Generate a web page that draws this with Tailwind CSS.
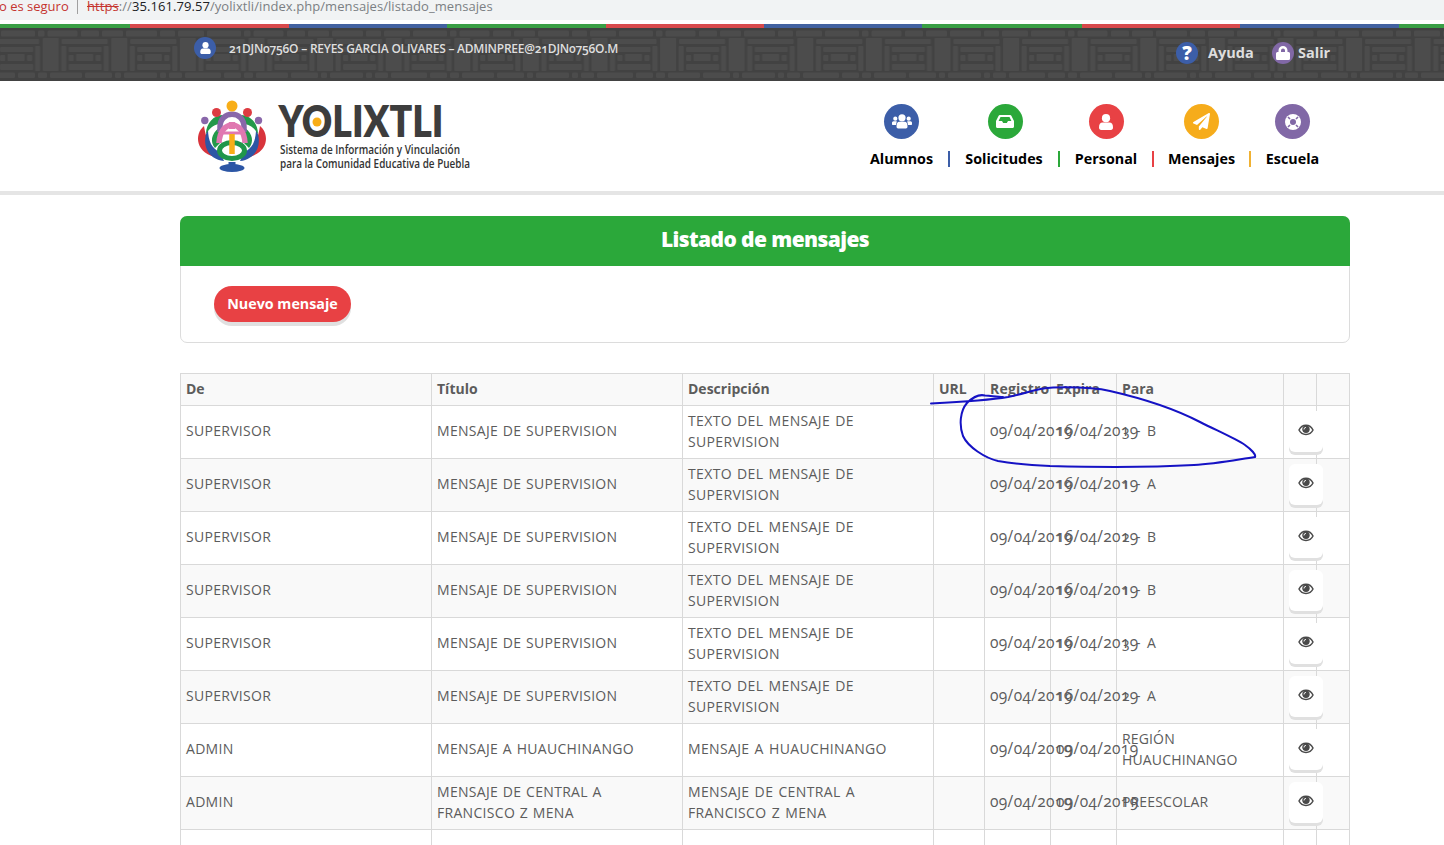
<!DOCTYPE html>
<html lang="es">
<head>
<meta charset="utf-8">
<title>Yolixtli - Listado de mensajes</title>
<script src="https://cdn.jsdelivr.net/npm/@tailwindcss/browser@4"></script>
</head>
<body class="relative h-[845px] overflow-hidden bg-white font-['Open_Sans','Noto_Sans',sans-serif] text-[#5c5c5c]">

<svg class="hidden">
  <symbol id="user" viewBox="0 0 14 16"><circle cx="7" cy="4.2" r="4.1"/><path d="M0 13.600c0-3.400 1.200-5 3.600-5h6.800c2.400 0 3.600 1.600 3.600 5 0 1.500-.8 2.400-2.200 2.400H2.200C.8 16 0 15.100 0 13.600z"/></symbol>
  <symbol id="eye" viewBox="0 0 16 12"><path d="M1 6C4-.3 12-.3 15 6 12 12 4 12 1 6z" fill="#fff" stroke="#4a4a4a" stroke-width="1.500"/><circle cx="8" cy="5.300" r="3.700" fill="#4a4a4a"/><path d="M6 5.500A2 2 0 0 1 8 3.400" stroke="#fff" fill="none" stroke-width=".9"/></symbol>
</svg>

<div class="flex h-5 items-start overflow-hidden bg-[#f1f3f4] text-[13px] leading-[13px] whitespace-nowrap">
  <span class="-ml-[1px] w-[70px] text-[#c5352f]">o es seguro</span>
  <span class="ml-2 h-[14px] w-px bg-[#a0a0a0]"></span>
  <span class="ml-[9px] tracking-[0.07px] text-[#7b7f83]"><span class="text-[#c5352f] line-through">https</span>://<span class="text-[#202124]">35.161.79.57</span>/yolixtli/index.php/mensajes/listado_mensajes</span>
</div>

<header>
  <div class="mt-1 flex h-1 overflow-hidden">
    <i class="h-full w-[130px] shrink-0 bg-[#3a9f45]"></i><i class="h-full w-[159px] shrink-0 bg-[#d8494b]"></i><i class="h-full w-[158px] shrink-0 bg-[#4261a0]"></i><i class="h-full w-[159px] shrink-0 bg-[#3a9f45]"></i><i class="h-full w-[158px] shrink-0 bg-[#d8494b]"></i><i class="h-full w-[158px] shrink-0 bg-[#4261a0]"></i><i class="h-full w-[160px] shrink-0 bg-[#3a9f45]"></i><i class="h-full w-[158px] shrink-0 bg-[#d8494b]"></i><i class="h-full w-[159px] shrink-0 bg-[#4261a0]"></i><i class="h-full w-[45px] shrink-0 bg-[#3a9f45]"></i>
  </div>
  <div class="relative h-[53px] bg-[#424242]">
    <svg class="absolute inset-0 h-full w-full" fill="#4c4c4c">
      <defs>
        <pattern id="weave" x="42.700" y="0" width="68.600" height="53" patternUnits="userSpaceOnUse">
          <rect x="0" y="10" width="16" height="33" rx="1"/>
          <rect x="19" y="11" width="46" height="5" rx="1"/>
          <rect x="18.500" y="18" width="5" height="25" rx="1"/><rect x="61" y="18" width="5" height="25" rx="1"/>
          <rect x="26" y="19" width="33" height="5" rx="1"/>
          <rect x="26" y="27" width="5" height="6" rx="1"/><rect x="33.500" y="26" width="17" height="7" rx="1"/><rect x="53" y="27" width="5" height="6" rx="1"/>
          <rect x="26" y="36" width="33" height="6" rx="1"/>
        </pattern>
        <pattern id="rows" x="38" y="0" width="206" height="53" patternUnits="userSpaceOnUse">
          <g transform="translate(-16 0)">
          <rect x="16" y="2.500" width="6.500" height="6" rx="1.500"/><rect x="25.500" y="2.500" width="30" height="6" rx="1.500"/><rect x="59" y="2.500" width="18" height="6" rx="1.500"/><rect x="80" y="2.500" width="21" height="6" rx="1.500"/><rect x="104" y="2.500" width="31" height="6" rx="1.500"/><rect x="138" y="2.500" width="15" height="6" rx="1.500"/><rect x="156" y="2.500" width="26" height="6" rx="1.500"/><rect x="185" y="2.500" width="34" height="6" rx="1.500"/>
          <rect x="16" y="44.500" width="9" height="5.500" rx="1.500"/><rect x="28" y="44.500" width="32" height="5.500" rx="1.500"/><rect x="63" y="44.500" width="27" height="5.500" rx="1.500"/><rect x="93" y="44.500" width="6" height="5.500" rx="1.500"/><rect x="102" y="44.500" width="33" height="5.500" rx="1.500"/><rect x="138" y="44.500" width="6" height="5.500" rx="1.500"/><rect x="147" y="44.500" width="13" height="5.500" rx="1.500"/><rect x="163" y="44.500" width="36" height="5.500" rx="1.500"/><rect x="202" y="44.500" width="17" height="5.500" rx="1.500"/>
          </g>
        </pattern>
      </defs>
      <rect width="100%" height="100%" fill="url(#weave)"/><rect width="100%" height="100%" fill="url(#rows)"/>
    </svg>
    <div class="relative flex h-full items-start pl-[194px] whitespace-nowrap text-[#dedede]">
      <span class="mt-[9px] flex size-[22px] items-center justify-center rounded-full bg-[#3c5ea8]"><svg class="h-3 w-[11px] fill-white"><use href="#user"/></svg></span>
      <span class="mt-[13px] ml-[13px] w-[390px] text-[12px] leading-4 font-semibold tracking-[-0.23px] oldstyle-nums">21DJN0756O – REYES GARCIA OLIVARES – ADMINPREE@21DJN0756O.M</span>
      <span class="mt-[14px] ml-[557px] flex size-[22px] items-center justify-center rounded-full bg-[#3c5ea8] text-[19px] leading-[22px] font-extrabold text-white">?</span>
      <b class="mt-[15px] ml-[10px] w-[45px] text-[14.500px] leading-5">Ayuda</b>
      <span class="mt-[14px] ml-[19px] flex size-[22px] items-center justify-center rounded-full bg-[#8168a6]"><svg viewBox="0 0 14 16" class="h-4 w-[14px] fill-white"><path fill-rule="evenodd" d="M1.500 7H2.500V5.500a4.500 4.500 0 0 1 9 0V7h1A1.500 1.500 0 0 1 14 8.500v5a1.500 1.500 0 0 1-1.500 1.500h-11A1.500 1.500 0 0 1 0 13.500v-5A1.500 1.500 0 0 1 1.500 7zM5 7h4V5.500a2 2 0 0 0-4 0z"/></svg></span>
      <b class="mt-[15px] ml-[4px] text-[14.500px] leading-5">Salir</b>
    </div>
  </div>

  <div class="flex h-[114px] items-start border-b-4 border-[#e5e5e5] pl-[192px]">
    <svg class="mt-[14px] h-[82px] w-[290px] shrink-0" viewBox="0 0 290 82">
      <g id="petals">
        <path d="M12 31C2 39 3 59 27 63C19 55 14 45 12 31z" fill="#d8343c"/>
        <path d="M16 34C9 48 15 64 32 66L28 57C20 54 16 46 16 34z" fill="#2c56a5"/>
        <path d="M14 39C14 28 22 20 31 20L27 29C21 30 17 34 14 39z" fill="#23994a"/>
        <path d="M27 33C19 39 18 47 23 53L28 48C25 44 26 40 28 38z" fill="#23994a"/>
      </g>
      <use href="#petals" transform="matrix(-1 0 0 1 80 0)"/>
      <g fill="none">
        <path d="M28 37V32C28 15 52 15 52 32V37" stroke="#8967aa" stroke-width="5.500"/>
        <path d="M27 48C28 24 52 24 53 48" stroke="#e078b1" stroke-width="5.500"/>
        <path d="M31 38H49" stroke="#e078b1" stroke-width="3"/>
        <path d="M40 27V34" stroke="#e078b1" stroke-width="6"/>
        <ellipse cx="40" cy="55.500" rx="12.500" ry="8" stroke="#20964a" stroke-width="5"/>
        <path d="M40 39V59" stroke="#f8ae18" stroke-width="5.500"/>
      </g>
      <ellipse cx="40" cy="73" rx="12.500" ry="4" fill="#2c56a5"/><rect x="36.500" y="67" width="7" height="5" fill="#2c56a5"/>
      <circle cx="40" cy="11" r="5.500" fill="#f8ae18"/>
      <g fill="#dd3b41"><circle cx="24.500" cy="17.500" r="4.500"/><circle cx="55.500" cy="17.500" r="4.500"/></g>
      <g fill="#8967aa"><circle cx="12.800" cy="25.500" r="3.700"/><circle cx="66.500" cy="25.500" r="3.700"/></g>
      <text x="86.500" y="42" textLength="165" lengthAdjust="spacingAndGlyphs" fill="#3d3d3d" font-family="Lato" font-weight="800" font-size="43">YOLIXTLI</text>
      <circle cx="125" cy="27" r="4.500" fill="#f8ae18"/>
      <text x="88" y="59" textLength="180" lengthAdjust="spacingAndGlyphs" class="fill-[#333] font-['Open_Sans',sans-serif] text-[12.500px] font-semibold">Sistema de Información y Vinculación</text>
      <text x="88" y="73" textLength="190" lengthAdjust="spacingAndGlyphs" class="fill-[#333] font-['Open_Sans',sans-serif] text-[12.500px] font-semibold">para la Comunidad Educativa de Puebla</text>
    </svg>
    <nav class="mt-[23px] ml-[388px] flex items-end gap-[15px] text-center text-[14.300px] leading-5 font-bold whitespace-nowrap text-black">
      <a class="flex w-[63px] flex-col items-center gap-[10px]"><span class="flex size-[35px] items-center justify-center rounded-full bg-[#3c5ea8]">
        <svg viewBox="0 0 20 15" class="h-[15px] w-5 fill-white"><circle cx="3.300" cy="4.700" r="2.100"/><circle cx="16.700" cy="4.700" r="2.100"/><path d="M0 9c0-1 .6-1.800 1.600-1.800h3.200L4 11H1C.3 11 0 10.600 0 10zM20 9c0-1-.6-1.800-1.600-1.800h-3.200L16 11h3c.7 0 1-.4 1-1z"/><circle cx="10" cy="3.800" r="3.600"/><path d="M4.500 12.500c0-3 1-4.800 2.700-4.800h5.600c1.700 0 2.700 1.800 2.700 4.800 0 1.200-.6 2-1.700 2H6.200c-1.100 0-1.700-.8-1.700-2z"/></svg></span>Alumnos</a>
      <i class="mb-[2px] h-4 w-[2px] bg-[#3c5ea8]"></i>
      <a class="flex w-[78px] flex-col items-center gap-[10px]"><span class="relative left-px flex size-[35px] items-center justify-center rounded-full bg-[#2ba83a]">
        <svg viewBox="0 0 18 13" class="h-[13px] w-[18px] fill-white"><path fill-rule="evenodd" d="M4 0h10c.7 0 1.200.3 1.500.9L18 6v5.500c0 .9-.6 1.500-1.500 1.500h-15C.6 13 0 12.400 0 11.500V6L2.500.9C2.800.3 3.300 0 4 0zM4.500 2L2.600 6H6l1.200 2h3.600L12 6h3.400l-1.900-4z"/></svg></span>Solicitudes</a>
      <i class="mb-[2px] h-4 w-[2px] bg-[#2ba83a]"></i>
      <a class="flex w-[62px] flex-col items-center gap-[10px]"><span class="flex size-[35px] items-center justify-center rounded-full bg-[#e84144]"><svg class="h-4 w-[14px] fill-white"><use href="#user"/></svg></span>Personal</a>
      <i class="mb-[2px] h-4 w-[2px] bg-[#e84144]"></i>
      <a class="flex w-[65px] flex-col items-center gap-[10px]"><span class="flex size-[35px] items-center justify-center rounded-full bg-[#f6ac1b]">
        <svg viewBox="0 0 512 512" class="size-[17px] fill-white"><path d="M476 3.200L12.500 270.600c-18.100 10.400-15.800 35.600 2.200 43.200L121 358.400l287.300-253.200c5.500-4.900 13.300 2.600 8.600 8.300L176 407v80.500c0 23.600 28.500 32.900 42.500 15.800L282 426l124.600 52.200c14.200 6 30.400-2.900 33-18.200l72-432C515 7.800 493.300-6.800 476 3.200z"/></svg></span>Mensajes</a>
      <i class="mb-[2px] h-4 w-[2px] bg-[#f0b132]"></i>
      <a class="flex w-[53px] flex-col items-center gap-[10px]"><span class="flex size-[35px] items-center justify-center rounded-full bg-[#8168a6]">
        <svg viewBox="0 0 16 16" class="size-4"><circle cx="8" cy="8" r="8" fill="#fff"/><circle cx="8" cy="8" r="3" fill="#8168a6"/><path d="M3 3l2 2M13 3l-2 2M3 13l2-2M13 13l-2-2" stroke="#8168a6" stroke-width="1.600"/></svg></span>Escuela</a>
    </nav>
  </div>
</header>

<main class="ml-[180px] w-[1170px] pt-[21px]">
  <section class="h-[127px] rounded-[7px] border border-[#dcdcdc]">
    <h1 class="-mx-px -mt-px h-[50px] rounded-t-[7px] bg-[#2ba83a] text-center text-[21px] leading-[46px] font-extrabold tracking-[-0.6px] text-white">Listado de mensajes</h1>
    <button class="mt-5 ml-[33px] h-9 w-[137px] rounded-full bg-[#e84144] text-[14.300px] font-bold whitespace-nowrap text-white shadow-[0_4px_0_#e0e0e0]">Nuevo mensaje</button>
  </section>

  <table class="mt-[30px] w-[1170px] table-fixed border-collapse text-left text-[14px] leading-[21px] oldstyle-nums [&_td]:border [&_td]:border-[#d9d9d9] [&_td]:px-[5px] [&_td]:pt-0 [&_td]:pb-[3px] [&_th]:border [&_th]:border-[#d9d9d9] [&_th]:px-[5px] [&_th]:pb-[2px] [&_tr]:h-[53px]">
    <colgroup><col class="w-[251px]"><col class="w-[251px]"><col class="w-[251px]"><col class="w-[51px]"><col class="w-[66px]"><col class="w-[66px]"><col class="w-[167px]"><col class="w-[33px]"><col class="w-[33px]"></colgroup>
    <thead><tr class="!h-8 bg-[#f9f9f9] whitespace-nowrap"><th>De</th><th>Título</th><th>Descripción</th><th>URL</th><th class="tracking-[0.2px]">Registro</th><th>Expira</th><th>Para</th><th></th><th></th></tr></thead>
    <tbody id="rows-body"></tbody>
  </table>
</main>

<template id="row">
  <tr class="even:bg-[#f9f9f9]">
    <td class="tracking-[0.3px]"></td>
    <td class="tracking-[0.3px] whitespace-pre-line [word-spacing:0.8px]"></td>
    <td class="tracking-[0.35px] whitespace-pre-line [word-spacing:1.200px]"></td>
    <td></td>
    <td class="text-[15.500px] tracking-[0.35px]"></td>
    <td class="text-[15.500px] tracking-[0.35px]"></td>
    <td class="tracking-[0.15px] [word-spacing:2.500px]"></td>
    <td class="!pb-0"><button class="relative -mt-[2px] flex h-[41px] w-[34px] items-center justify-center rounded-[6px] bg-white pb-[3px] shadow-[0_3px_0_#e0e0e0]"><svg class="h-3 w-4"><use href="#eye"/></svg></button></td>
    <td></td>
  </tr>
</template>

<svg class="pointer-events-none absolute top-0 left-0 h-[845px] w-[1444px]" fill="none" stroke="#1512c4" stroke-width="2" stroke-linecap="round"><path d="M931 403.500C960 402 990 400 1008 397C1028 393 1037 388 1053 387.500C1075 387 1097 388 1110 391C1145 399 1175 409 1200 422C1220 432 1236 439 1245 445C1252 450 1256 455 1255 457C1235 460 1215 464 1194 465C1140 468 1090 467 1050 466C1030 465 1010 463 998 461C985 458 968 447 963 436C959 425 960 411 967 403C972 398 979 394 985 395.500C992 396 998 397 1003 397"/></svg>

<script>
  const sup = p => ['SUPERVISOR', 'MENSAJE DE SUPERVISION', 'TEXTO DEL MENSAJE DE SUPERVISION', '', '09/04/2019', '16/04/2019', p];
  const data = [sup('3 - B'), sup('1 - A'), sup('2 - B'), sup('1 - B'), sup('3 - A'), sup('2 - A'),
    ['ADMIN', 'MENSAJE A HUAUCHINANGO', 'MENSAJE A HUAUCHINANGO', '', '09/04/2019', '09/04/2019', 'REGIÓN HUAUCHINANGO'],
    ['ADMIN', 'MENSAJE DE CENTRAL A\nFRANCISCO Z MENA', 'MENSAJE DE CENTRAL A\nFRANCISCO Z MENA', '', '09/04/2019', '09/04/2019', 'PREESCOLAR'],
    ['', '', '', '', '', '', '']];
  const body = document.getElementById('rows-body');
  for (const r of data) {
    const tr = document.getElementById('row').content.firstElementChild.cloneNode(true);
    r.forEach((t, i) => tr.cells[i].textContent = t);
    if (!r[0]) tr.querySelector('button').remove();
    body.append(tr);
  }
</script>
</body>
</html>
